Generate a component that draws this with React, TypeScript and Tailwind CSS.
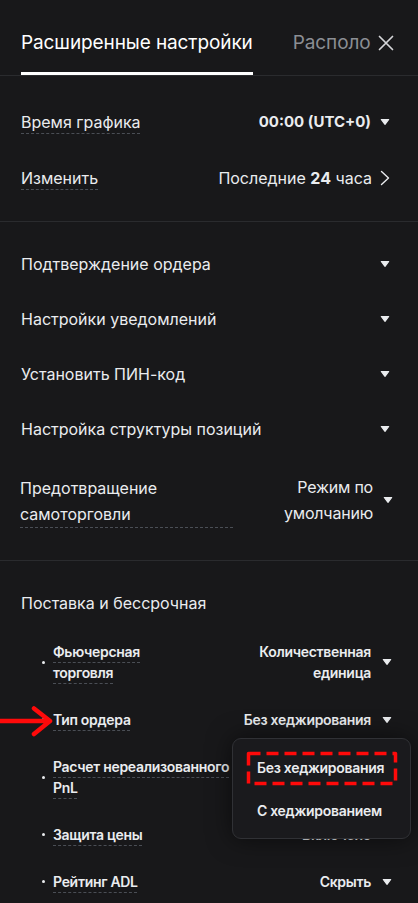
import React from "react";

const Caret = () => (
  <svg width="10" height="8" viewBox="0 0 10 8" className="shrink-0">
    <path d="M1.3 1.5h7.4L5 6.3z" fill="#eaecef" stroke="#eaecef" strokeWidth="1.2" strokeLinejoin="round" />
  </svg>
);

const MainRow = ({ label }: { label: string }) => (
  <div className="flex items-center justify-between h-[55px]">
    <span className="text-[16px] leading-[20px] text-[#eaecef]">{label}</span>
    <Caret />
  </div>
);

const dashed =
  "underline decoration-dashed decoration-[#4a4e55] decoration-1 underline-offset-[5px]";

const Bullet = () => <span className="w-[3px] h-[3px] rounded-full bg-[#eaecef] ml-[21px] mr-[8px] shrink-0" />;

export default function App() {
  return (
    <div className="relative w-[418px] h-[903px] overflow-hidden bg-[#18181a] font-[Inter,'Noto_Sans',sans-serif] text-[#eaecef]">
      {/* Header */}
      <div className="flex items-stretch h-[76px] border-b border-[#2a2b2e] pl-[21px] pr-[24px]">
        <div className="border-b-[3px] border-white pt-[32px] text-[19px] leading-[22px] text-white tracking-[-0.1px] whitespace-nowrap">
          Расширенные настройки
        </div>
        <div className="ml-[40px] flex-1 pt-[32px] text-[19px] leading-[22px] text-[#8b8e94] tracking-[-0.1px] whitespace-nowrap overflow-hidden">
          Располо
        </div>
        <div className="pt-[35px]">
          <svg width="16" height="16" viewBox="0 0 16 16">
            <path d="M1.5 1.5l13 13M14.5 1.5l-13 13" stroke="#d4d5d8" strokeWidth="1.7" strokeLinecap="round" />
          </svg>
        </div>
      </div>

      {/* Section 1 */}
      <div className="pl-[21px] pr-[28px] pt-[18px] pb-[15px] border-b border-[#2a2b2e]">
        <div className="flex items-center justify-between h-[56px]">
          <span className={"text-[16px] leading-[20px] " + dashed}>Время графика</span>
          <div className="flex items-center gap-[9px]">
            <span className="text-[15px] font-bold">00:00 (UTC+0)</span>
            <Caret />
          </div>
        </div>
        <div className="flex items-center justify-between h-[56px]">
          <span className={"text-[16px] leading-[20px] " + dashed}>Изменить</span>
          <div className="flex items-center gap-[8px]">
            <span className="text-[16px]">
              Последние <span className="font-bold">24</span> часа
            </span>
            <svg width="10" height="16" viewBox="0 0 10 16" className="shrink-0">
              <path d="M1.5 1.5L8.5 8l-7 6.5" stroke="#eaecef" strokeWidth="1.4" fill="none" strokeLinecap="round" strokeLinejoin="round" />
            </svg>
          </div>
        </div>
      </div>

      {/* Section 2 */}
      <div className="pl-[21px] pr-[28px] pt-[14px] pb-[32px] border-b border-[#2a2b2e]">
        <MainRow label="Подтверждение ордера" />
        <MainRow label="Настройки уведомлений" />
        <MainRow label="Установить ПИН-код" />
        <MainRow label="Настройка структуры позиций" />
        <div className="flex items-center justify-between pt-[18px] mr-[-3px]">
          <div className="w-[213px] ml-[-1px] border-b border-dashed border-[#4a4e55] text-[16px] leading-[26px]">
            Предотвращение
            <br />
            самоторговли
          </div>
          <div className="flex items-center gap-[10px] pb-[2px]">
            <span className="text-right text-[16px] leading-[26px] tracking-[-0.2px]">
              Режим по
              <br />
              умолчанию
            </span>
            <Caret />
          </div>
        </div>
      </div>

      {/* Section 3 */}
      <div className="pl-[21px] pr-[26px] pt-[14px]">
        <div className="flex items-center h-[55px] text-[16px] leading-[20px]">Поставка и бессрочная</div>
        <div className="mt-[11px] flex flex-col gap-[26px] text-[14px] leading-[21px] font-semibold tracking-[-0.3px]">
          <div className="flex items-center justify-between">
            <div className="flex items-center">
              <Bullet />
              <span>
                <span className={dashed}>Фьючерсная</span>
                <br />
                <span className={dashed}>торговля</span>
              </span>
            </div>
            <div className="flex items-center gap-[11px]">
              <span className="text-right">
                Количественная
                <br />
                единица
              </span>
              <Caret />
            </div>
          </div>
          <div className="flex items-center justify-between">
            <div className="flex items-center">
              <Bullet />
              <span className={dashed}>Тип ордера</span>
            </div>
            <div className="flex items-center gap-[11px]">
              <span>Без хеджирования</span>
              <Caret />
            </div>
          </div>
          <div className="flex items-center justify-between">
            <div className="flex items-center">
              <Bullet />
              <span>
                <span className={dashed}>Расчет нереализованного</span>
                <br />
                <span className={dashed}>PnL</span>
              </span>
            </div>
          </div>
          <div className="flex items-center justify-between">
            <div className="flex items-center">
              <Bullet />
              <span className={dashed}>Защита цены</span>
            </div>
            <div className="flex items-center gap-[11px]">
              <span>Включено</span>
              <Caret />
            </div>
          </div>
          <div className="flex items-center justify-between">
            <div className="flex items-center">
              <Bullet />
              <span className={dashed}>Рейтинг ADL</span>
            </div>
            <div className="flex items-center gap-[11px]">
              <span>Скрыть</span>
              <Caret />
            </div>
          </div>
        </div>
      </div>

      {/* Dropdown menu */}
      <div className="absolute left-[232px] top-[738px] w-[179px] h-[101px] rounded-[9px] border border-[#303135] bg-[#1a1a1d] shadow-[0_0_24px_rgba(0,0,0,0.55)] pl-[24px] pt-[18px] flex flex-col gap-[21px] text-[14px] leading-[22px] font-semibold tracking-[-0.3px] text-[#eaecef]">
        <span>Без хеджирования</span>
        <span>С хеджированием</span>
      </div>

      {/* Red dashed highlight */}
      <svg className="absolute left-[246px] top-[751px]" width="152" height="35" viewBox="0 0 152 35">
        <rect x="2.5" y="2.5" width="147" height="30" fill="none" stroke="#ff0a0a" strokeWidth="3.5" strokeDasharray="12 6" strokeLinejoin="round" />
      </svg>

      {/* Red arrow */}
      <svg className="absolute left-0 top-[704px]" width="56" height="36" viewBox="0 0 56 36">
        <path d="M-2 17H48M34 4.5L50 17L34 30" stroke="#ff0a0a" strokeWidth="4.5" fill="none" strokeLinecap="round" strokeLinejoin="round" />
      </svg>
    </div>
  );
}
